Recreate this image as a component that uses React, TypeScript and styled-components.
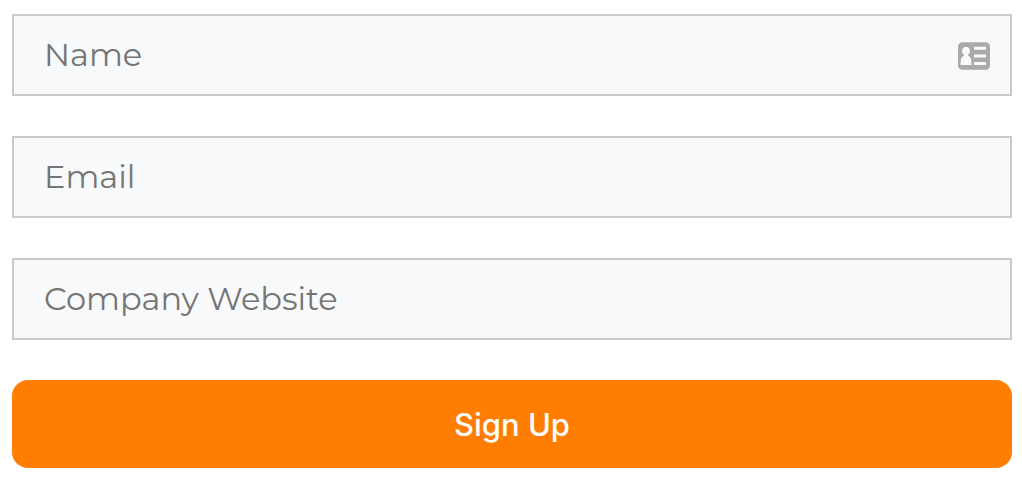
import React from 'react';
import styled, { createGlobalStyle } from 'styled-components';

const GlobalStyle = createGlobalStyle`
  * { box-sizing: border-box; }
  body { margin: 0; background: #ffffff; }
`;

const Form = styled.form`
  display: flex;
  flex-direction: column;
  gap: 40px;
  padding: 14px 10px 12px 12px;
`;

const Field = styled.div`
  position: relative;
`;

const Input = styled.input`
  display: block;
  width: 100%;
  height: 82px;
  margin: 0;
  padding: 0 30px 2px;
  border: 2px solid #c9cacc;
  border-radius: 0;
  background: #f8f9fb;
  color: #333333;
  font: 400 32px Montserrat, Inter, sans-serif;
  outline: none;

  &::placeholder {
    color: #757575;
    opacity: 1;
  }
`;

const CardIcon = styled.svg`
  position: absolute;
  top: 28px;
  right: 22px;
  width: 32px;
  height: 28px;
  pointer-events: none;
`;

const SubmitButton = styled.button`
  height: 88px;
  padding: 0;
  border: 0;
  border-radius: 16px;
  background: #ff7d00;
  color: #ffffff;
  font: 500 31px Inter, sans-serif;
  cursor: pointer;
`;

export default function App() {
  return (
    <>
      <GlobalStyle />
      <Form onSubmit={(event) => event.preventDefault()}>
        <Field>
          <Input type="text" name="name" placeholder="Name" aria-label="Name" />
          <CardIcon viewBox="0 0 32 28" aria-hidden="true">
            <rect y="0.3" width="32" height="27.4" rx="4.5" fill="#a9a9a9" />
            <ellipse cx="8" cy="9" rx="4" ry="4.3" fill="#f8f9fb" />
            <path d="M6 11h4v2.5c2.4 1.2 3.4 3.3 3.4 6.5v3H2.6v-3c0-3.2 1-5.3 3.4-6.5z" fill="#f8f9fb" />
            <path d="M16 6.3h12M16 14h12M16 21.5h12" stroke="#f8f9fb" strokeWidth="3" />
          </CardIcon>
        </Field>
        <Field>
          <Input type="email" name="email" placeholder="Email" aria-label="Email" />
        </Field>
        <Field>
          <Input type="text" name="website" placeholder="Company Website" aria-label="Company Website" />
        </Field>
        <SubmitButton type="submit">Sign Up</SubmitButton>
      </Form>
    </>
  );
}
